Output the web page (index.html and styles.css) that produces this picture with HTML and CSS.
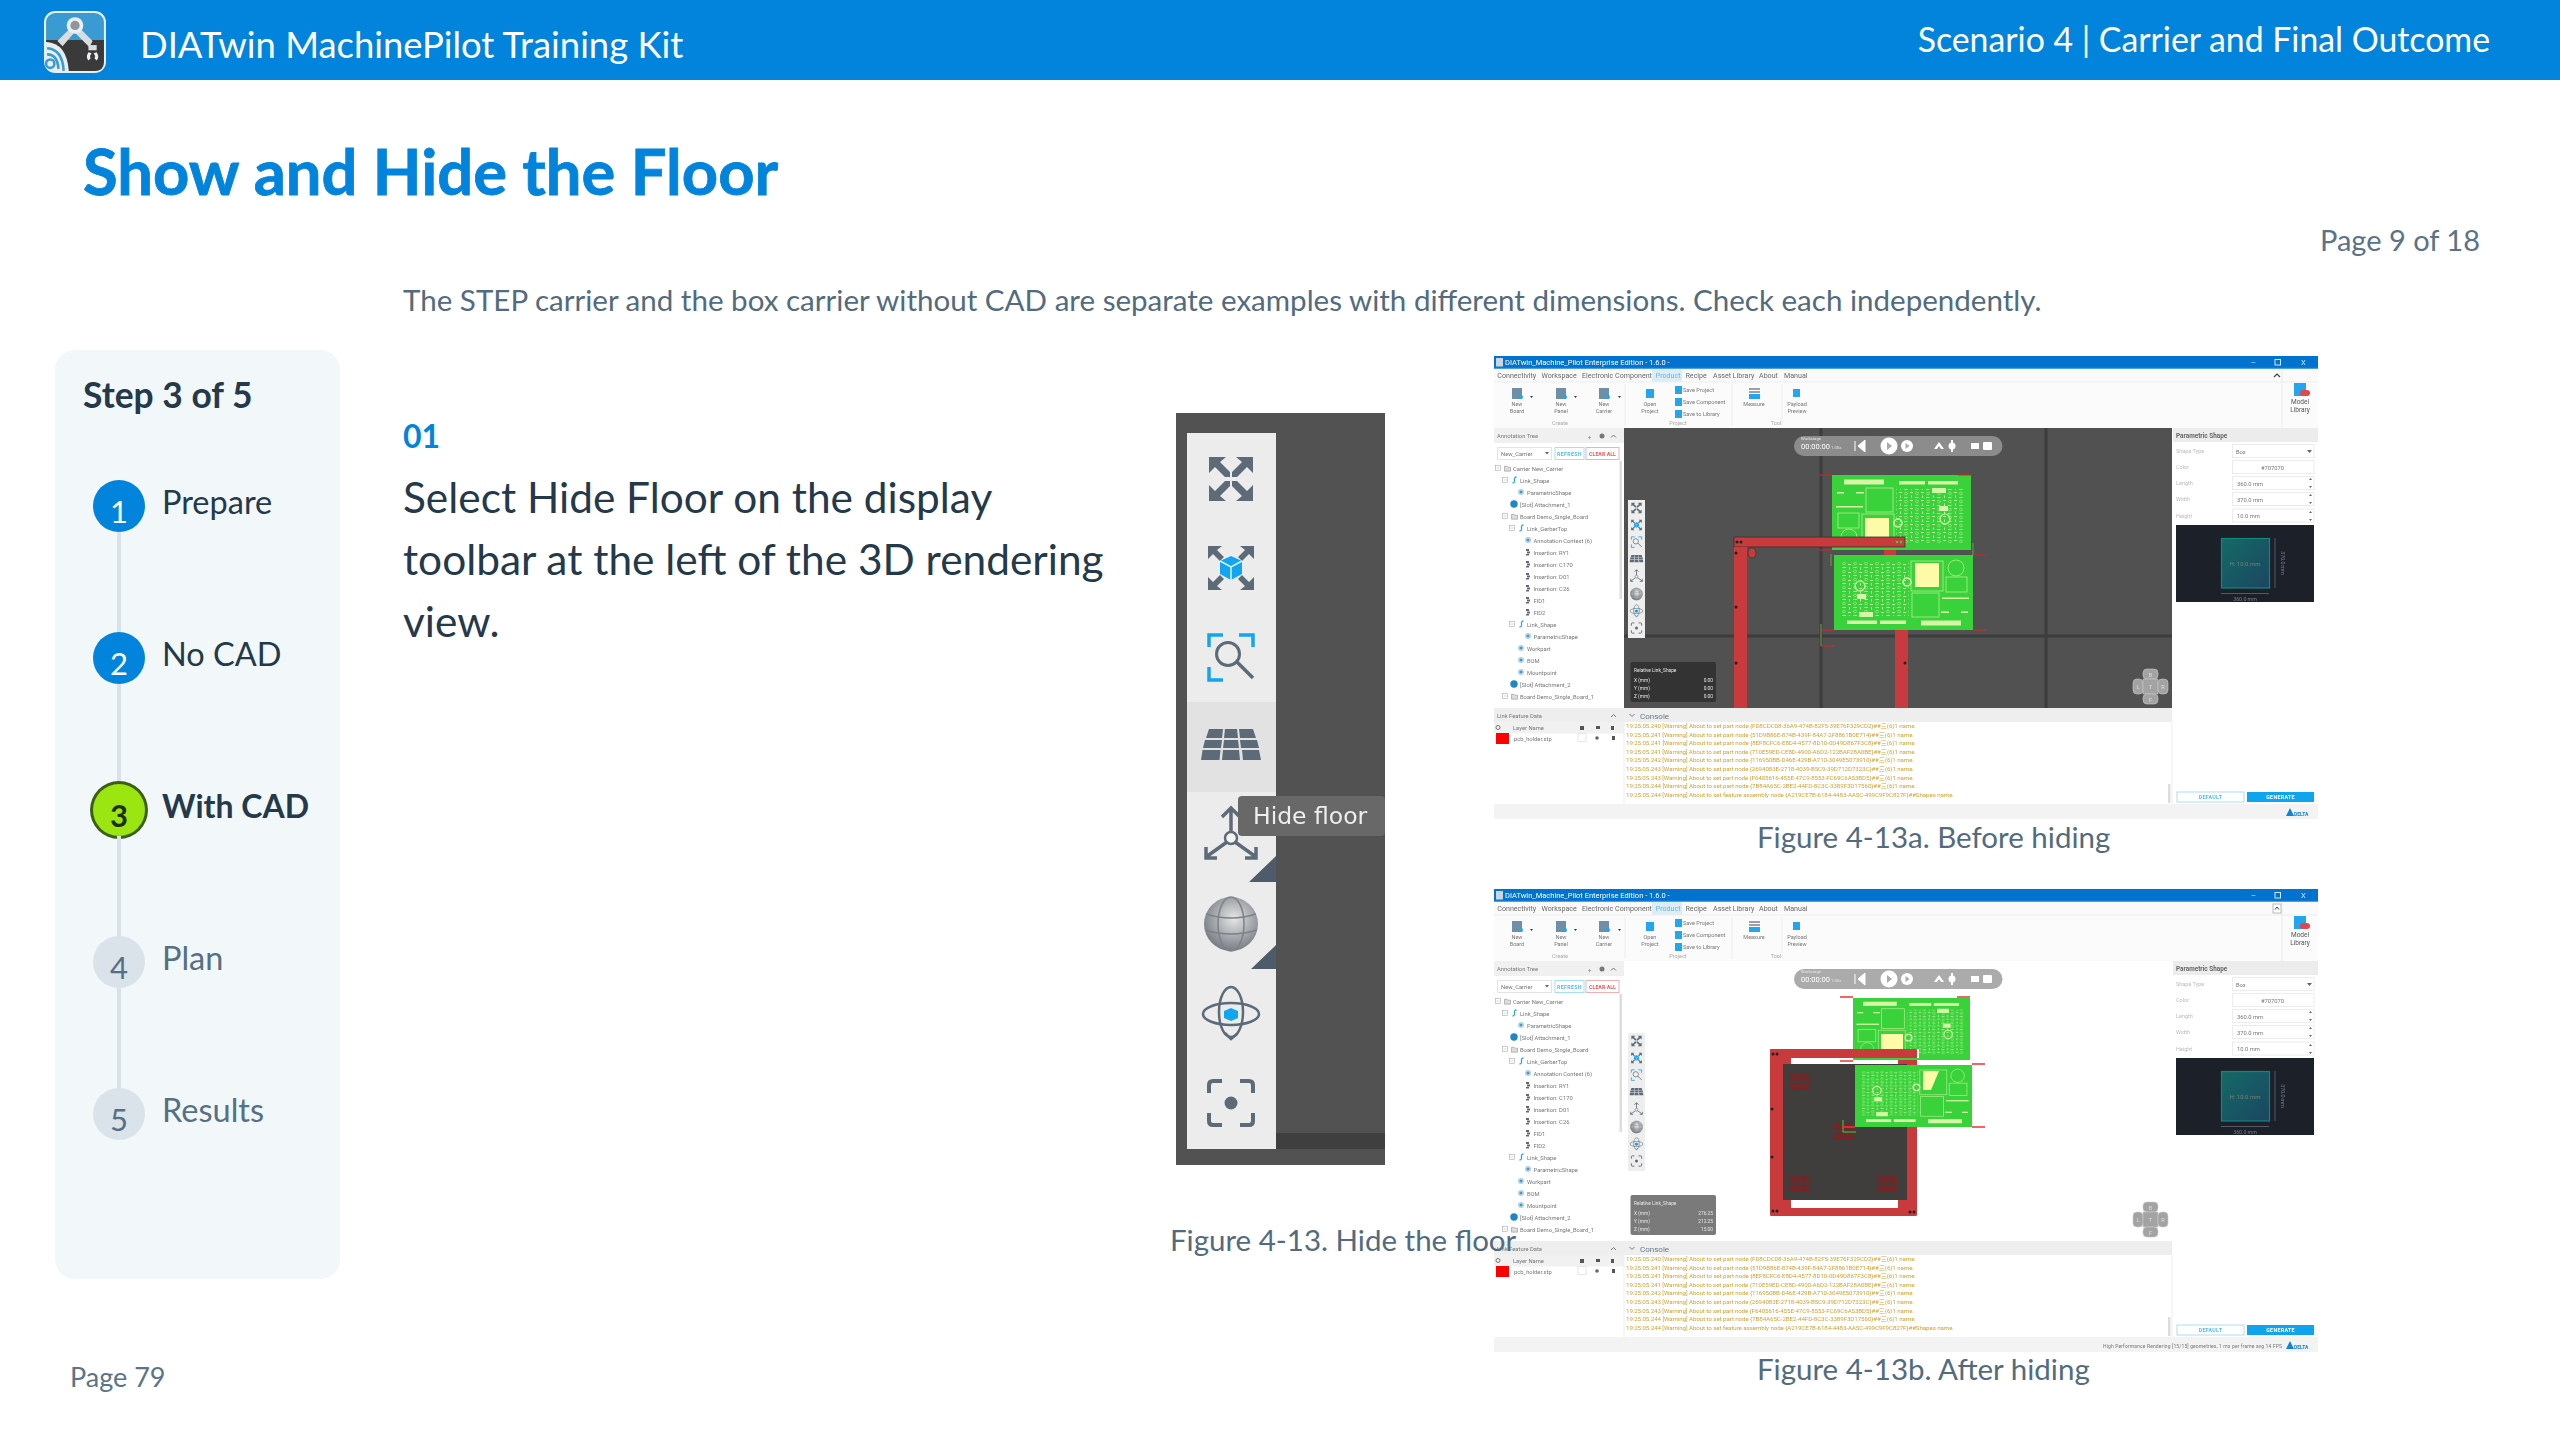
FILE: index.html
```html
<!DOCTYPE html>
<html lang="en">
<head>
    <meta charset="UTF-8">
    <title>Show and Hide the Floor</title>
    <link rel="stylesheet" href="styles.css">
</head>
<body>
    <!-- shared drawings for the two app screenshots and the toolbar crop -->
    <svg class="defs" width="0" height="0" aria-hidden="true">
        <defs>
            <radialGradient id="globeFill" cx="0.55" cy="0.4" r="0.65">
                <stop offset="0" stop-color="#e6e6e6"/>
                <stop offset="1" stop-color="#6f757b"/>
            </radialGradient>
            <linearGradient id="boxFill" x1="0" y1="0" x2="1" y2="1">
                <stop offset="0" stop-color="#146a66"/>
                <stop offset="1" stop-color="#1b4661"/>
            </linearGradient>
            <pattern id="pcbDots" width="11" height="8" patternUnits="userSpaceOnUse">
                <rect x="1" y="1" width="3" height="1" fill="#c4efa0"/>
                <circle cx="8" cy="2.500" r="1.400" fill="none" stroke="#c4efa0" stroke-width=".5"/>
                <rect x="2" y="4.500" width="1" height="2.500" fill="#c4efa0"/>
                <rect x="6" y="6" width="3.500" height="1" fill="#c4efa0"/>
            </pattern>

            <path id="corner" d="M8 8h17l-6 5 10 10v5h-5L14 18l-6 6z"/>
            <symbol id="ico-fit" viewBox="0 0 60 60">
                <g fill="#5d6b78">
                    <use href="#corner"/>
                    <use href="#corner" transform="matrix(-1 0 0 1 60 0)"/>
                    <use href="#corner" transform="matrix(1 0 0 -1 0 60)"/>
                    <use href="#corner" transform="matrix(-1 0 0 -1 60 60)"/>
                </g>
            </symbol>
            <path id="corner-s" d="M7 8h14l-5 4 7 7-4 4-7-7-5 5z"/>
            <symbol id="ico-fitbox" viewBox="0 0 60 60">
                <g fill="#5d6b78">
                    <use href="#corner-s"/>
                    <use href="#corner-s" transform="matrix(-1 0 0 1 60 0)"/>
                    <use href="#corner-s" transform="matrix(1 0 0 -1 0 60)"/>
                    <use href="#corner-s" transform="matrix(-1 0 0 -1 60 60)"/>
                </g>
                <path d="M30 18l11 5v13l-11 6-11-6V23z" fill="#12a5f0"/>
                <path d="M19 23l11 6 11-6M30 29v13" fill="none" stroke="#dff3fd" stroke-width="1.5"/>
            </symbol>
            <symbol id="ico-zoom" viewBox="0 0 60 60">
                <path d="M8 20V8h14M38 8h14v12M8 40v13h14" fill="none" stroke="#12a5f0" stroke-width="3.5"/>
                <circle cx="27" cy="27" r="11.5" fill="none" stroke="#5d6b78" stroke-width="3"/>
                <path d="M36 35l16 16" stroke="#5d6b78" stroke-width="3.5"/>
            </symbol>
            <symbol id="ico-floor" viewBox="0 0 60 60">
                <g fill="#5d6b78">
                    <path d="M8 13h14l-1 9H5z"/><path d="M24 13h12l1 9H23z"/><path d="M38 13h14l3 9H39z"/>
                    <path d="M4 24h17l-1 8H2z"/><path d="M23 24h14l1 8H22z"/><path d="M39 24h17l2 8H40z"/>
                    <path d="M1.500 34h18l-1 10H0z"/><path d="M22 34h16l1 10H21z"/><path d="M41 34h17l2 10H42z"/>
                </g>
            </symbol>
            <symbol id="ico-axis" viewBox="0 0 60 60">
                <g fill="none" stroke="#5d6b78" stroke-width="3.500">
                    <path d="M30 27V4M21 12l9-9 9 9"/>
                    <path d="M26 37L5 52M5 42v11h11"/>
                    <path d="M34 37l21 15M55 42v11H44"/>
                </g>
                <circle cx="30" cy="33" r="6" fill="#f4f4f4" stroke="#5d6b78" stroke-width="2.500"/>
            </symbol>
            <symbol id="ico-globe" viewBox="0 0 60 60">
                <ellipse cx="30" cy="30" rx="27" ry="27" fill="url(#globeFill)"/>
                <g fill="none" stroke="#7b8289" stroke-width="1.500">
                    <ellipse cx="30" cy="30" rx="13" ry="27"/>
                    <path d="M5 20q25 8 50 0M4 36q26 8 52 0"/>
                </g>
            </symbol>
            <symbol id="ico-orbit" viewBox="0 0 60 60">
                <g fill="none" stroke="#5d6b78" stroke-width="2.500">
                    <ellipse cx="30" cy="30" rx="28" ry="11"/>
                    <ellipse cx="30" cy="28" rx="12" ry="25"/>
                    <path d="M24 49l6 6 6-5"/>
                </g>
                <path d="M30 24l7 3v7l-7 3-7-3v-7z" fill="#12a5f0"/>
            </symbol>
            <symbol id="ico-focus" viewBox="0 0 60 60">
                <path d="M8 20v-8q0-4 4-4h9M39 8h9q4 0 4 4v8M8 40v8q0 4 4 4h9M39 52h9q4 0 4-4v-8" fill="none" stroke="#5d6b78" stroke-width="4"/>
                <circle cx="30" cy="30" r="6.500" fill="#5d6b78"/>
            </symbol>

            <!-- tree icons -->
            <symbol id="t-box" viewBox="0 0 6 6"><rect x=".5" y=".5" width="5" height="5" fill="none" stroke="#aaa" stroke-width=".6"/><path d="M1.500 3h3" stroke="#aaa" stroke-width=".5"/></symbol>
            <symbol id="t-folder" viewBox="0 0 8 7"><path d="M.5 1h3l1 1h3v4.500h-7z" fill="#ddd" stroke="#888" stroke-width=".6"/></symbol>
            <symbol id="t-link" viewBox="0 0 7 8"><path d="M5.500 1Q3 1 3.500 4T1.500 7" fill="none" stroke="#23a6ee" stroke-width="1.300"/></symbol>
            <symbol id="t-gem" viewBox="0 0 8 8"><circle cx="4" cy="4" r="3" fill="#a9d5ef"/><circle cx="4" cy="4" r="1.300" fill="#5a8fb3"/></symbol>
            <symbol id="t-slot" viewBox="0 0 8 8"><circle cx="4" cy="4" r="3.700" fill="#1b87c4"/></symbol>
            <symbol id="t-ins" viewBox="0 0 6 8"><path d="M1 1h3v2H1zM2 3.500h3v2H2zM1 6h3v1.500H1z" fill="#667"/></symbol>

            <!-- circuit board, base green with silk screen -->
            <symbol id="pcb" viewBox="0 0 139 75" preserveAspectRatio="none">
                <rect width="139" height="75" fill="#3ad23b"/>
                <g fill="#d6f5a8">
                    <rect x="12" y="4.500" width="40" height="5"/>
                    <rect x="67" y="6" width="26" height="3.500"/>
                    <rect x="96" y="6" width="30" height="3.500"/>
                    <rect x="5" y="17" width="7" height="1.500"/>
                    <rect x="24" y="17" width="8" height="1.500"/>
                    <rect x="4" y="31" width="27" height="1.500"/>
                </g>
                <g fill="none" stroke="#a6eb85" stroke-width=".9">
                    <rect x="34" y="13" width="27" height="24"/>
                    <rect x="6" y="38" width="21" height="15"/>
                    <rect x="30" y="39" width="32" height="30"/>
                    <circle cx="17" cy="62" r="8"/>
                </g>
                <rect x="64" y="14" width="68" height="54" fill="url(#pcbDots)"/>
                <rect x="100" y="13" width="14" height="5" fill="#d6f5a8"/>
                <rect x="107" y="31" width="9" height="5" fill="#d6f5a8"/>
                <circle cx="113" cy="44" r="5" fill="none" stroke="#d6f5a8" stroke-width="1.200"/>
                <circle cx="66" cy="48" r="4" fill="none" stroke="#d6f5a8" stroke-width="1.500"/>
            </symbol>

            <symbol id="flowers" viewBox="0 0 24 20">
                <g fill="none" stroke="#8c1c1c" stroke-width="1.300">
                    <circle cx="5" cy="5" r="2.500"/><circle cx="9" cy="7" r="2.500"/><circle cx="15" cy="5" r="2.500"/><circle cx="19" cy="7" r="2.500"/>
                    <circle cx="5" cy="15" r="2.500"/><circle cx="9" cy="15" r="2.500"/><circle cx="15" cy="15" r="2.500"/><circle cx="19" cy="15" r="2.500"/>
                </g>
            </symbol>

            <!-- app window chrome, the same in both shots -->
            <g id="chrome">
                <rect width="824" height="463" fill="#fff"/>
                <rect width="824" height="12.500" fill="#0272cf"/>
                <rect y="11.800" width="824" height="1" fill="#3f9be0"/>
                <rect x="2" y="2" width="7" height="8.500" fill="#ccd6e0"/>
                <text class="tx win" x="11" y="8.800">DIATwin_Machine_Pilot Enterprise Edition - 1.6.0 -</text>
                <text class="tx win-b" x="757" y="8.800">–</text>
                <rect x="781" y="3.500" width="5.500" height="5.500" fill="none" stroke="#cfe6f8"/>
                <text class="tx win-b" x="807" y="9">X</text>

                <rect y="13" width="824" height="13" fill="#fafafa"/>
                <rect x="158" y="13" width="30" height="13" fill="#dcedf6"/>
                <g class="tx menu">
                    <text x="3.300" y="22">Connectivity</text>
                    <text x="47.500" y="22">Workspace</text>
                    <text x="88" y="22">Electronic Component</text>
                    <text x="161.700" y="22" class="on">Product</text>
                    <text x="191.500" y="22">Recipe</text>
                    <text x="219" y="22">Asset Library</text>
                    <text x="265" y="22">About</text>
                    <text x="290" y="22">Manual</text>
                </g>

                <rect y="26" width="824" height="46" fill="#fbfbfb"/>
                <path d="M0 26h824" stroke="#efefef"/>
                <path d="M131 28v42M238 28v42M288 28v42" stroke="#eee"/>
                <path d="M788 13v59" stroke="#ececec"/>
                <g fill="#6f8fa8">
                    <rect x="18" y="32" width="10" height="11"/>
                    <rect x="62" y="32" width="10" height="11"/>
                    <rect x="105" y="32" width="10" height="11"/>
                </g>
                <g fill="#23a6ee">
                    <circle cx="27" cy="41" r="2"/><circle cx="71" cy="41" r="2"/><circle cx="114" cy="41" r="2"/>
                    <rect x="152" y="33" width="8" height="9"/>
                    <rect x="181" y="30" width="7" height="8"/>
                    <rect x="181" y="42" width="7" height="8"/>
                    <rect x="181" y="54" width="7" height="8"/>
                    <rect x="255" y="38" width="11" height="5"/>
                    <rect x="299" y="33" width="7" height="8"/>
                    <rect x="800" y="27" width="12" height="13"/>
                </g>
                <path d="M255 33h11M255 36h11" stroke="#445" stroke-width="1.200"/>
                <path d="M36 40l3 0-1.500 2zM80 40l3 0-1.500 2zM124 40l3 0-1.500 2z" fill="#333"/>
                <rect x="806" y="34" width="10" height="6" rx="3" fill="#e2474b"/>
                <g class="tx rib">
                    <text x="23" y="50">New</text><text x="23" y="56.500">Board</text>
                    <text x="67" y="50">New</text><text x="67" y="56.500">Panel</text>
                    <text x="110" y="50">New</text><text x="110" y="56.500">Carrier</text>
                    <text x="156" y="50">Open</text><text x="156" y="56.500">Project</text>
                    <text x="260" y="50">Measure</text>
                    <text x="303" y="50">Payload</text><text x="303" y="56.500">Preview</text>
                    <text x="806" y="47.500" class="ml">Model</text><text x="806" y="55.500" class="ml">Library</text>
                    <text x="66" y="69" class="grp">Create</text>
                    <text x="184" y="69" class="grp">Project</text>
                    <text x="282" y="69" class="grp">Tool</text>
                </g>
                <g class="tx rib-l">
                    <text x="189" y="36">Save Project</text>
                    <text x="189" y="48">Save Component</text>
                    <text x="189" y="60">Save to Library</text>
                </g>

                <!-- left panel -->
                <rect y="72" width="130" height="15" fill="#f0f0f0"/>
                <text class="tx hd" x="3" y="82">Annotation Tree</text>
                <text class="tx hd" x="94" y="82.500">+</text>
                <circle cx="108" cy="80" r="2.500" fill="#777"/>
                <path d="M117 81.500l2.500-2.500 2.500 2.500" fill="none" stroke="#777"/>
                <rect x="3.500" y="91.500" width="54" height="12" fill="#fff" stroke="#e4e4e4"/>
                <text class="tx rw" x="7" y="100">New_Carrier</text>
                <path d="M51 96h4l-2 2.500z" fill="#666"/>
                <rect x="61" y="91.500" width="29" height="12" fill="#fff" stroke="#a4e0f8"/>
                <text class="tx btn-r" x="75.500" y="100" text-anchor="middle">REFRESH</text>
                <rect x="92" y="91.500" width="33" height="12" fill="#fff" stroke="#f4b0b0"/>
                <text class="tx btn-c" x="108.500" y="100" text-anchor="middle">CLEAR ALL</text>
                <rect x="125.500" y="105" width="2.500" height="138" fill="#ddd"/>

                <g class="tx rw">
                    <text x="19" y="114.500">Carrier  New_Carrier</text>
                    <text x="26" y="126.500">Link_Shape</text>
                    <text x="33" y="138.500">ParametricShape</text>
                    <text x="26" y="150.500">[Slot] Attachment_1</text>
                    <text x="26" y="162.500">Board  Demo_Single_Board</text>
                    <text x="33" y="174.500">Link_GerberTop</text>
                    <text x="39.500" y="186.500">Annotation Context (6)</text>
                    <text x="39.500" y="198.500">Insertion: RY1</text>
                    <text x="39.500" y="210.500">Insertion: C170</text>
                    <text x="39.500" y="222.500">Insertion: D01</text>
                    <text x="39.500" y="234.500">Insertion: C26</text>
                    <text x="39.500" y="246.500">FID1</text>
                    <text x="39.500" y="258.500">FID2</text>
                    <text x="33" y="270.500">Link_Shape</text>
                    <text x="39.500" y="282.500">ParametricShape</text>
                    <text x="33" y="294.500">Workpart</text>
                    <text x="33" y="306.500">BOM</text>
                    <text x="33" y="318.500">Mountpoint</text>
                    <text x="26" y="330.500">[Slot] Attachment_2</text>
                    <text x="26" y="342.500">Board  Demo_Single_Board_1</text>
                </g>
                <g>
                    <use href="#t-box" x="1" y="109" width="6" height="6"/><use href="#t-folder" x="10" y="109" width="7" height="7"/>
                    <use href="#t-box" x="8" y="121" width="6" height="6"/><use href="#t-link" x="17" y="120" width="7" height="8"/>
                    <use href="#t-gem" x="23" y="132" width="8" height="8"/>
                    <use href="#t-slot" x="16" y="144" width="8" height="8"/>
                    <use href="#t-box" x="8" y="157" width="6" height="6"/><use href="#t-folder" x="17" y="157" width="7" height="7"/>
                    <use href="#t-box" x="15" y="169" width="6" height="6"/><use href="#t-link" x="24" y="168" width="7" height="8"/>
                    <use href="#t-gem" x="30" y="180" width="8" height="8"/>
                    <use href="#t-ins" x="31" y="192" width="6" height="8"/>
                    <use href="#t-ins" x="31" y="204" width="6" height="8"/>
                    <use href="#t-ins" x="31" y="216" width="6" height="8"/>
                    <use href="#t-ins" x="31" y="228" width="6" height="8"/>
                    <use href="#t-ins" x="31" y="240" width="6" height="8"/>
                    <use href="#t-ins" x="31" y="252" width="6" height="8"/>
                    <use href="#t-box" x="15" y="265" width="6" height="6"/><use href="#t-link" x="24" y="264" width="7" height="8"/>
                    <use href="#t-gem" x="30" y="276" width="8" height="8"/>
                    <use href="#t-gem" x="23" y="288" width="8" height="8"/>
                    <use href="#t-gem" x="23" y="300" width="8" height="8"/>
                    <use href="#t-gem" x="23" y="312" width="8" height="8"/>
                    <use href="#t-slot" x="16" y="324" width="8" height="8"/>
                    <use href="#t-box" x="8" y="337" width="6" height="6"/><use href="#t-folder" x="17" y="337" width="7" height="7"/>
                </g>

                <rect y="352" width="130" height="14" fill="#eee"/>
                <text class="tx hd" x="3" y="361.500">Link Feature Data</text>
                <path d="M117 361l2.500-2.500 2.500 2.500" fill="none" stroke="#777"/>
                <rect y="366" width="130" height="11.500" fill="#f1f1f1"/>
                <text class="tx hd" x="19" y="374">Layer Name</text>
                <circle cx="4" cy="371.500" r="2" fill="none" stroke="#777"/>
                <path d="M86 370h4v4h-4zM102 370h4v3h-4zM117 370h3v4h-3z" fill="#555"/>
                <rect x="2" y="377" width="13" height="11" fill="#f00"/>
                <text class="tx rw" x="20" y="385">pcb_holder.stp</text>
                <rect x="84" y="377.500" width="8" height="8" fill="#fff" stroke="#e6e6e6"/>
                <circle cx="103" cy="382" r="1.800" fill="#666"/>
                <rect x="118" y="380" width="3" height="4" fill="#555"/>

                <!-- console -->
                <rect x="130" y="352" width="548" height="14" fill="#eee"/>
                <path d="M135.500 358l2.500 2.500 2.500-2.500" fill="none" stroke="#667" stroke-width=".9"/>
                <text class="tx con-h" x="146" y="362.500">Console</text>
                <g class="tx log">
                    <text x="132" y="372" textLength="290">19:25:05.240 [Warning] About to set part node {FD8CDC08-36A9-474B-82F5-39E76F329CD2}##三(6)1 name.</text>
                    <text x="132" y="380.600" textLength="288">19:25:05.241 [Warning] About to set part node {51D9B86E-874B-439F-84A7-2F8861B0E714}##三(6)1 name.</text>
                    <text x="132" y="389.200" textLength="290">19:25:05.241 [Warning] About to set part node {8EF8CFC6-E8D4-4577-8D10-0D49D867F3C8}##三(6)1 name.</text>
                    <text x="132" y="397.800" textLength="290">19:25:05.241 [Warning] About to set part node {710E59ED-CE8D-4900-A6D2-122BAF28A0BE}##三(6)1 name.</text>
                    <text x="132" y="406.400" textLength="288">19:25:05.242 [Warning] About to set part node {116950BB-D46E-429B-A710-3049E5073910}##三(6)1 name.</text>
                    <text x="132" y="415" textLength="288">19:25:05.243 [Warning] About to set part node {2694083E-2718-4039-B5C9-39D712D7323C}##三(6)1 name.</text>
                    <text x="132" y="423.600" textLength="288">19:25:05.243 [Warning] About to set part node {F6405616-455E-47C9-8553-FC69C6A53BD5}##三(6)1 name.</text>
                    <text x="132" y="432.200" textLength="290">19:25:05.244 [Warning] About to set part node {7B84A65C-2BE2-44FD-8C3C-3389F3D17560}##三(6)1 name.</text>
                    <text x="132" y="440.800" textLength="328">19:25:05.244 [Warning] About to set feature assembly node {A219CE7B-6184-4483-AA5C-499C9F9C827F}##Shapes name.</text>
                </g>
                <rect x="674" y="428" width="2.500" height="19" fill="#ddd"/>
                <path d="M130 366v82M678 366v82" stroke="#eee"/>

                <!-- right panel -->
                <rect x="679" y="72" width="145" height="14" fill="#ececec"/>
                <text class="tx hd-b" x="682" y="81.500">Parametric Shape</text>
                <g class="tx lbl">
                    <text x="682" y="97">Shape Type</text>
                    <text x="682" y="113">Color</text>
                    <text x="682" y="129">Length</text>
                    <text x="682" y="145">Width</text>
                    <text x="682" y="161.500">Height</text>
                </g>
                <g fill="#fff" stroke="#ececec">
                    <rect x="738.500" y="88.500" width="81.500" height="13"/>
                    <rect x="738.500" y="104.500" width="81.500" height="13"/>
                    <rect x="738.500" y="120.500" width="81.500" height="13"/>
                    <rect x="738.500" y="136.500" width="81.500" height="13"/>
                    <rect x="738.500" y="153" width="81.500" height="13"/>
                </g>
                <g class="tx rw">
                    <text x="742" y="97.500">Box</text>
                    <text x="767" y="113.500">#707070</text>
                    <text x="743" y="129.500">360.0 mm</text>
                    <text x="743" y="145.500">370.0 mm</text>
                    <text x="743" y="162">10.0 mm</text>
                </g>
                <path d="M813 94h5l-2.500 3zM815 124l1.500-2 1.500 2zM815 130l1.500 2 1.500-2zM815 140l1.500-2 1.500 2zM815 146l1.500 2 1.500-2zM815 157l1.500-2 1.500 2zM815 163l1.500 2 1.500-2z" fill="#666"/>
                <rect x="682" y="169" width="138" height="77" fill="#1c2029"/>
                <rect x="727.500" y="182.500" width="48" height="49.500" fill="url(#boxFill)" stroke="#15867f" stroke-width="1.200"/>
                <text class="tx dim" x="751" y="210" text-anchor="middle">H: 10.0 mm</text>
                <path d="M781 182v50M727 237.500h48" stroke="#667" stroke-width=".8"/>
                <text class="tx dim2" x="751" y="244.500" text-anchor="middle">360.0 mm</text>
                <text class="tx dim2" transform="translate(787 207) rotate(90)" text-anchor="middle">370.0 mm</text>
                <rect x="683" y="436" width="67" height="10" fill="#fff" stroke="#a9def7"/>
                <text class="tx btn-r" x="716.500" y="443" text-anchor="middle">DEFAULT</text>
                <rect x="753" y="436" width="67" height="10" fill="#0ea5ee"/>
                <text class="tx btn-g" x="786.500" y="443" text-anchor="middle">GENERATE</text>

                <!-- status bar -->
                <rect y="448" width="824" height="15" fill="#f3f3f3"/>
                <path d="M792 460l4-8 4 8z" fill="#1184d6"/>
                <text class="tx dl" x="800" y="460">DELTA</text>
            </g>

            <!-- small display toolbar over the 3D view -->
            <g id="mini-bar">
                <rect x="134" y="144" width="17" height="138" fill="#eee"/>
                <use href="#ico-fit" x="135.500" y="145" width="14" height="14"/>
                <use href="#ico-fitbox" x="135.500" y="162" width="14" height="14"/>
                <use href="#ico-zoom" x="135.500" y="179" width="14" height="14"/>
                <use href="#ico-floor" x="135.500" y="196" width="14" height="14"/>
                <use href="#ico-axis" x="135.500" y="213" width="14" height="14"/>
                <use href="#ico-globe" x="135.500" y="231" width="14" height="14"/>
                <use href="#ico-orbit" x="135.500" y="248" width="14" height="14"/>
                <use href="#ico-focus" x="135.500" y="265" width="14" height="14"/>
            </g>

            <g id="pill-icons">
                <path d="M361 85v10M371 84l-7 6 7 6z" fill="#fff" stroke="#fff"/>
                <circle cx="395" cy="90" r="8.500" fill="#fff"/>
                <path d="M393 86l5 4-5 4z" fill="#aaa"/>
                <circle cx="413" cy="90" r="6" fill="#fff"/>
                <path d="M411.500 87l4 3-4 3z" fill="#aaa"/>
                <g fill="#fff">
                    <path d="M440 93l5-7 5 7-3 0-2-3-2 3z"/>
                    <circle cx="458" cy="90" r="3.500"/><rect x="457" y="84" width="2" height="12"/>
                    <rect x="477" y="87" width="8" height="6"/>
                    <rect x="489" y="86" width="9" height="8" rx="1"/>
                </g>
                <text class="tx pl-s" x="307" y="84">Workstage</text>
                <text class="tx pl" x="307" y="93">00:00:00</text>
                <text class="tx pl-s" x="337" y="92.500">1.00x</text>
            </g>

            <g id="nav-cube">
                <g fill="#a3a3a3" stroke="#c9c9c9" stroke-width=".6">
                    <rect x="649" y="313" width="15" height="10" rx="4"/>
                    <rect x="639" y="323" width="10" height="15" rx="4"/>
                    <rect x="649" y="323" width="15" height="15"/>
                    <rect x="664" y="323" width="10" height="15" rx="4"/>
                    <rect x="649" y="338" width="15" height="10" rx="4"/>
                </g>
                <g class="tx nc">
                    <text x="656.500" y="320.500">B</text><text x="644" y="332.500">L</text><text x="656.500" y="332.500">T</text>
                    <text x="669" y="332.500">R</text><text x="656.500" y="346">F</text>
                </g>
            </g>
        </defs>
    </svg>

    <header class="topbar">
        <svg class="logo" viewBox="0 0 60 60" width="62" height="62">
            <rect x="1" y="1" width="58" height="58" rx="10" fill="#3a9bd2" stroke="#e9eef1" stroke-width="2"/>
            <path d="M2 28h56v21q0 9-9 9H20V46Q18 32 2 30z" fill="#3a3a3a"/>
            <path d="M2 30q20 1 22 28H11q-9 0-9-9z" fill="#e9eef1"/>
            <g fill="none" stroke="#3a9bd2" stroke-width="2.500">
                <path d="M3 36q15 1 16 22"/><path d="M3 42q10 0 11 14"/>
                <circle cx="6" cy="51" r="4"/>
            </g>
            <path d="M26 16L13 29l5 5 12-14zM34 16l13 13-3 6-14-14z" fill="#d9dde0"/>
            <circle cx="30" cy="14" r="8" fill="#eceff1"/>
            <circle cx="30" cy="14" r="4.500" fill="#8f979d"/>
            <path d="M43 33h8v5h-8z" fill="#d9dde0"/>
            <path d="M43 40q-3 5 0 8l2-2q-1-3 1-5zM51 40q3 5 0 8l-2-2q1-3-1-5z" fill="#eceff1"/>
        </svg>
        <div class="app-name">DIATwin MachinePilot Training Kit</div>
        <div class="scenario">Scenario 4 | Carrier and Final Outcome</div>
    </header>

    <h1 class="page-title">Show and Hide the Floor</h1>
    <div class="page-count">Page 9 of 18</div>
    <p class="intro">The STEP carrier and the box carrier without CAD are separate examples with different dimensions. Check each independently.</p>

    <main class="content">
        <div class="left-col">
            <aside class="step-card">
                <div class="step-head">Step 3 of 5</div>
                <ol class="steps">
                    <li class="step done"><span class="dot">1</span><span class="label">Prepare</span></li>
                    <li class="step done"><span class="dot">2</span><span class="label">No CAD</span></li>
                    <li class="step current"><span class="dot">3</span><span class="label">With CAD</span></li>
                    <li class="step"><span class="dot">4</span><span class="label">Plan</span></li>
                    <li class="step"><span class="dot">5</span><span class="label">Results</span></li>
                </ol>
            </aside>
            <div class="page-num">Page 79</div>
        </div>

        <section class="instruction">
            <div class="num">01</div>
            <p class="instruction-text">Select Hide Floor on the display toolbar at the left of the 3D rendering view.</p>
        </section>

        <figure class="tool-fig">
            <svg class="tool-shot" viewBox="0 0 209 752" width="209" height="752">
                <rect width="209" height="752" fill="#525252"/>
                <rect x="11" y="720" width="198" height="16" fill="#3f3f3f"/>
                <rect x="11" y="20" width="89" height="716" fill="#ececec"/>
                <rect x="11" y="289" width="89" height="90" fill="#e2e2e2"/>
                <use href="#ico-fit" x="25" y="36" width="60" height="60"/>
                <use href="#ico-fitbox" x="25" y="125" width="60" height="60"/>
                <use href="#ico-zoom" x="25" y="214" width="60" height="60"/>
                <use href="#ico-floor" x="25" y="303" width="60" height="60"/>
                <use href="#ico-axis" x="25" y="392" width="60" height="60"/>
                <use href="#ico-globe" x="25" y="481" width="60" height="60"/>
                <use href="#ico-orbit" x="25" y="571" width="60" height="60"/>
                <use href="#ico-focus" x="25" y="660" width="60" height="60"/>
                <path d="M73 469l27-26v26zM75 556l25-24v24z" fill="#4e5b6b"/>
                <rect x="62" y="383" width="147" height="40" rx="4" fill="#686868"/>
                <text class="tip" x="77" y="411">Hide floor</text>
            </svg>
            <figcaption class="caption tool-cap">Figure 4-13. Hide the floor</figcaption>
        </figure>

        <div class="shots">
            <figure class="shot-fig">
                <svg class="shot" viewBox="0 0 824 463" width="824" height="463">
                    <use href="#chrome"/>
                    <rect x="130" y="72" width="548" height="280" fill="#515151"/>
                    <path d="M327 72v280M552 72v280M130 280h548" stroke="#3d3d3d" stroke-width="3"/>
                    <use href="#pcb" x="338" y="119" width="139" height="75"/>
                    <rect x="371" y="162" width="24" height="24" fill="#fdfba8"/>
                    <use href="#pcb" transform="rotate(180 409.500 236.500)" x="340" y="199" width="139" height="75"/>
                    <rect x="421" y="207" width="24" height="24" fill="#fdfba8"/>
                    <path d="M338 119h-13M477 119h-13M338 194h-13M479 199h13M479 274h13M340 274h-13M327 290h13" stroke="#d22" stroke-width="1.200"/>
                    <path d="M479 187v12M337 198v12M327 268v22" stroke="#6da34a" stroke-width="1"/>
                    <rect x="240" y="181" width="171" height="10" fill="#c83a3b" stroke="#333" stroke-width=".8"/>
                    <rect x="240" y="191" width="13" height="161" fill="#c83a3b"/>
                    <rect x="401" y="274" width="13" height="78" fill="#c83a3b"/>
                    <rect x="390" y="194" width="12" height="5" fill="#c83a3b"/>
                    <ellipse cx="258" cy="197" rx="4" ry="5" fill="#c83a3b" stroke="#333" stroke-width=".7"/>
                    <g fill="#222">
                        <circle cx="243" cy="186" r="1.500"/><circle cx="247" cy="186" r="1.500"/>
                        <circle cx="242" cy="197" r="1.500"/><circle cx="242" cy="251" r="1.500"/><circle cx="242" cy="307" r="1.500"/>
                        <circle cx="411" cy="307" r="1.500"/>
                    </g>
                    <circle cx="403" cy="186" r="1.300" fill="#3ad23b"/><circle cx="407" cy="186" r="1.300" fill="#3ad23b"/>

                    <rect x="300" y="80" width="208.500" height="20" rx="10" fill="#8c8c8c"/>
                    <use href="#pill-icons"/>
                    <use href="#mini-bar"/>
                    <rect x="136.500" y="306" width="85.500" height="40" rx="2" fill="#333"/>
                    <g class="tx pn">
                        <text x="140" y="316">Relative Link_Shape</text>
                        <text x="140" y="325.500">X (mm)</text>
                        <text x="140" y="333.500">Y (mm)</text>
                        <text x="140" y="341.500">Z (mm)</text>
                        <text x="219" y="325.500" text-anchor="end">0.00</text>
                        <text x="219" y="333.500" text-anchor="end">0.00</text>
                        <text x="219" y="341.500" text-anchor="end">0.00</text>
                    </g>
                    <use href="#nav-cube"/>
                    <path d="M780 21l3-3 3 3" fill="none" stroke="#444" stroke-width="1.200"/>
                </svg>
                <figcaption class="caption cap-a">Figure 4-13a. Before hiding</figcaption>
            </figure>

            <figure class="shot-fig">
                <svg class="shot" viewBox="0 0 824 463" width="824" height="463">
                    <use href="#chrome"/>
                    <rect x="276" y="160" width="147" height="167" rx="1.500" fill="#c83a3b"/>
                    <rect x="297" y="169" width="107" height="150" fill="#fff"/>
                    <rect x="289" y="175" width="124" height="136" fill="#403d3d"/>
                    <use href="#flowers" x="294" y="182" width="24" height="20"/>
                    <use href="#flowers" x="294" y="284" width="24" height="20"/>
                    <use href="#flowers" x="381" y="284" width="24" height="20"/>
                    <use href="#flowers" x="338" y="232" width="24" height="20"/>
                    <path d="M349 231v12M349 243h13" stroke="#3ad23b" stroke-width="1"/>
                    <use href="#pcb" x="359" y="109" width="117" height="62"/>
                    <rect x="387" y="145" width="22" height="20" fill="#fdfba8"/>
                    <rect x="276" y="160" width="147" height="9" rx="1" fill="#c83a3b"/>
                    <rect x="423" y="160" width="2" height="9" fill="#fff"/>
                    <use href="#pcb" transform="rotate(180 419.500 207)" x="361" y="176" width="117" height="62"/>
                    <path d="M429 182h16l-8 19h-8z" fill="#fdfba8"/>
                    <path d="M359 108h-13M476 108h-13M359 172h-13M478 175h13M478 238h13M361 238h-13" stroke="#e33" stroke-width="1.500"/>
                    <g fill="#222">
                        <circle cx="279" cy="165" r="1.500"/><circle cx="283" cy="165" r="1.500"/>
                        <circle cx="279" cy="322" r="1.500"/><circle cx="283" cy="322" r="1.500"/>
                        <circle cx="278" cy="220" r="1.500"/><circle cx="278" cy="268" r="1.500"/>
                        <circle cx="420" cy="323" r="1.500"/><circle cx="416" cy="323" r="1.500"/>
                    </g>

                    <rect x="300" y="80" width="208.500" height="20" rx="10" fill="#ababab"/>
                    <use href="#pill-icons"/>
                    <use href="#mini-bar"/>
                    <rect x="136.500" y="306" width="85.500" height="40" rx="2" fill="#7a7a7a"/>
                    <g class="tx pn">
                        <text x="140" y="316">Relative Link_Shape</text>
                        <text x="140" y="325.500">X (mm)</text>
                        <text x="140" y="333.500">Y (mm)</text>
                        <text x="140" y="341.500">Z (mm)</text>
                        <text x="219" y="325.500" text-anchor="end">276.25</text>
                        <text x="219" y="333.500" text-anchor="end">212.25</text>
                        <text x="219" y="341.500" text-anchor="end">15.00</text>
                    </g>
                    <use href="#nav-cube"/>
                    <rect x="779" y="15" width="8" height="9" fill="#fff" stroke="#bbb"/>
                    <path d="M781 20.500l2-2.500 2 2.500" fill="none" stroke="#444" stroke-width="1"/>
                    <text class="tx st" x="788" y="458.500" text-anchor="end" textLength="179">High Performance Rendering [15/15] geometries, 1 ms per frame avg 14 FPS</text>
                </svg>
                <figcaption class="caption cap-b">Figure 4-13b. After hiding</figcaption>
            </figure>
        </div>
    </main>
</body>
</html>
```
FILE: styles.css
```css
html, body {
    margin: 0;
    padding: 0;
}

body {
    width: 2560px;
    height: 1440px;
    overflow: hidden;
    background-color: #ffffff;
    color: #24394a;
    font-family: "Lato", "Open Sans", sans-serif;
}

figure, ol, p, h1 {
    margin: 0;
    padding: 0;
}

.defs {
    position: absolute;
}

.topbar {
    display: flex;
    align-items: center;
    height: 80px;
    padding: 0 70px 0 44px;
    box-sizing: border-box;
    background-color: #0284dc;
    color: #ffffff;
}
.topbar > .logo {
    flex: none;
    margin-top: 3px;
}
.topbar > .app-name {
    margin-left: 34px;
    padding-top: 8px;
    font-size: 36.400px;
}
.topbar > .scenario {
    margin-left: auto;
    padding-bottom: 2px;
    font-size: 33.800px;
}

.page-title {
    height: 140px;
    padding: 0 0 0 83px;
    color: #0284dc;
    font-size: 63.300px;
    font-weight: 700;
    line-height: 182px;
    -webkit-text-stroke: 0.8px #0284dc;
}

.page-count {
    padding-right: 80px;
    color: #5a7387;
    font-size: 29px;
    line-height: 40px;
    text-align: right;
}

.intro {
    margin-top: 20px;
    padding-left: 403px;
    color: #526b7e;
    font-size: 29.550px;
    line-height: 40px;
}

.content {
    display: flex;
    margin-top: 30px;
    padding-left: 55px;
}

.left-col {
    flex: none;
    width: 285px;
}

.step-card {
    height: 929px;
    padding: 23px 0 0 28px;
    box-sizing: border-box;
    border-radius: 20px;
    background-color: #f2f7fa;
}
.step-head {
    font-size: 35.400px;
    font-weight: 700;
    line-height: 44px;
}

.steps {
    display: flex;
    flex-direction: column;
    gap: 100px;
    margin: 63px 0 0 10px;
    list-style: none;
}
.step {
    position: relative;
    display: flex;
    gap: 17px;
    height: 52px;
    color: #557085;
}
.step::after {
    content: "";
    position: absolute;
    top: 52px;
    left: 24px;
    width: 4px;
    height: 100px;
    background-color: #d9e2e9;
}
.step:last-child::after {
    display: none;
}
.step > .dot {
    flex: none;
    width: 52px;
    height: 52px;
    padding-top: 5px;
    box-sizing: border-box;
    border-radius: 50%;
    background-color: #dbe3ea;
    font-size: 31px;
    line-height: 52px;
    text-align: center;
}
.step > .label {
    font-size: 32.500px;
    line-height: 44px;
}
.step.done {
    color: #24394a;
}
.step.done > .dot {
    background-color: #0284dc;
    color: #ffffff;
}
.step.current {
    color: #24394a;
}
.step.current > .dot {
    background-color: #9be510;
    box-shadow: 0 0 0 3px #3c5f16;
    color: #1d3016;
    font-weight: 700;
}
.step.current > .label {
    font-size: 32px;
    font-weight: 700;
}

.page-num {
    margin-top: 80px;
    padding-left: 15px;
    color: #5a7387;
    font-size: 27px;
    line-height: 36px;
}

.instruction {
    flex: none;
    width: 767px;
    margin-left: 63px;
    padding-top: 64px;
}
.instruction > .num {
    color: #0284dc;
    font-size: 32px;
    font-weight: 700;
    line-height: 44px;
}
.instruction-text {
    width: 720px;
    margin-top: 8px;
    font-size: 42.400px;
    line-height: 62px;
}

.tool-fig {
    flex: none;
    width: 324px;
    padding-top: 63px;
}
.tool-shot {
    display: block;
    margin-left: 6px;
    filter: blur(0.7px);
}
.tip {
    fill: #eeeeee;
    font-family: "DejaVu Sans", sans-serif;
    font-size: 23.500px;
}

.caption {
    color: #526b7e;
    font-size: 29.500px;
    line-height: 40px;
    white-space: nowrap;
}
.tool-fig > .tool-cap {
    position: relative;
    z-index: 1;
    margin-top: 55px;
}

.shots {
    flex: none;
    width: 824px;
    padding-top: 6px;
}
.shot-fig {
    height: 533px;
}
.shot {
    display: block;
    filter: blur(0.6px);
}
.shot-fig > .caption {
    margin-top: -2px;
    padding: 0 0 0 263px;
    line-height: 40px;
}
.shot-fig > .cap-b {
    margin-top: -3px;
}

/* text inside the two app shots */
.tx {
    font-family: "Roboto", "Noto Sans CJK SC", sans-serif;
}
.win { fill: #ffffff; font-size: 7.500px; }
.win-b { fill: #cfe6f8; font-size: 7.500px; }
.menu { fill: #6a6a6a; font-size: 7.100px; }
.menu .on { fill: #63b6ea; }
.rib { fill: #777777; font-size: 5.500px; text-anchor: middle; }
.rib .grp { fill: #aaaaaa; }
.rib .ml { fill: #555555; font-size: 6.500px; }
.rib-l { fill: #777777; font-size: 5.600px; }
.hd { fill: #777777; font-size: 5.800px; }
.hd-b { fill: #666666; font-size: 6.400px; font-weight: 700; }
.rw { fill: #777777; font-size: 5.800px; }
.btn-r { fill: #53bdf2; font-size: 5.300px; font-weight: 700; letter-spacing: .3px; }
.btn-c { fill: #ee5a5a; font-size: 5.300px; font-weight: 700; }
.btn-g { fill: #ffffff; font-size: 5.300px; font-weight: 700; letter-spacing: .3px; }
.con-h { fill: #667788; font-size: 8px; }
.log { fill: #d4a336; font-size: 6.200px; }
.lbl { fill: #bbbbbb; font-size: 5.500px; }
.dim { fill: #77806f; font-size: 6px; }
.dim2 { fill: #77808a; font-size: 5.200px; }
.dl { fill: #1184d6; font-size: 5px; font-weight: 700; }
.pn { fill: #e6e6e6; font-size: 4.800px; }
.pl { fill: #ffffff; font-size: 7.500px; }
.pl-s { fill: #e6e6e6; font-size: 4.200px; }
.nc { fill: #dddddd; font-size: 5.500px; text-anchor: middle; }
.st { fill: #777777; font-size: 5px; }
```
